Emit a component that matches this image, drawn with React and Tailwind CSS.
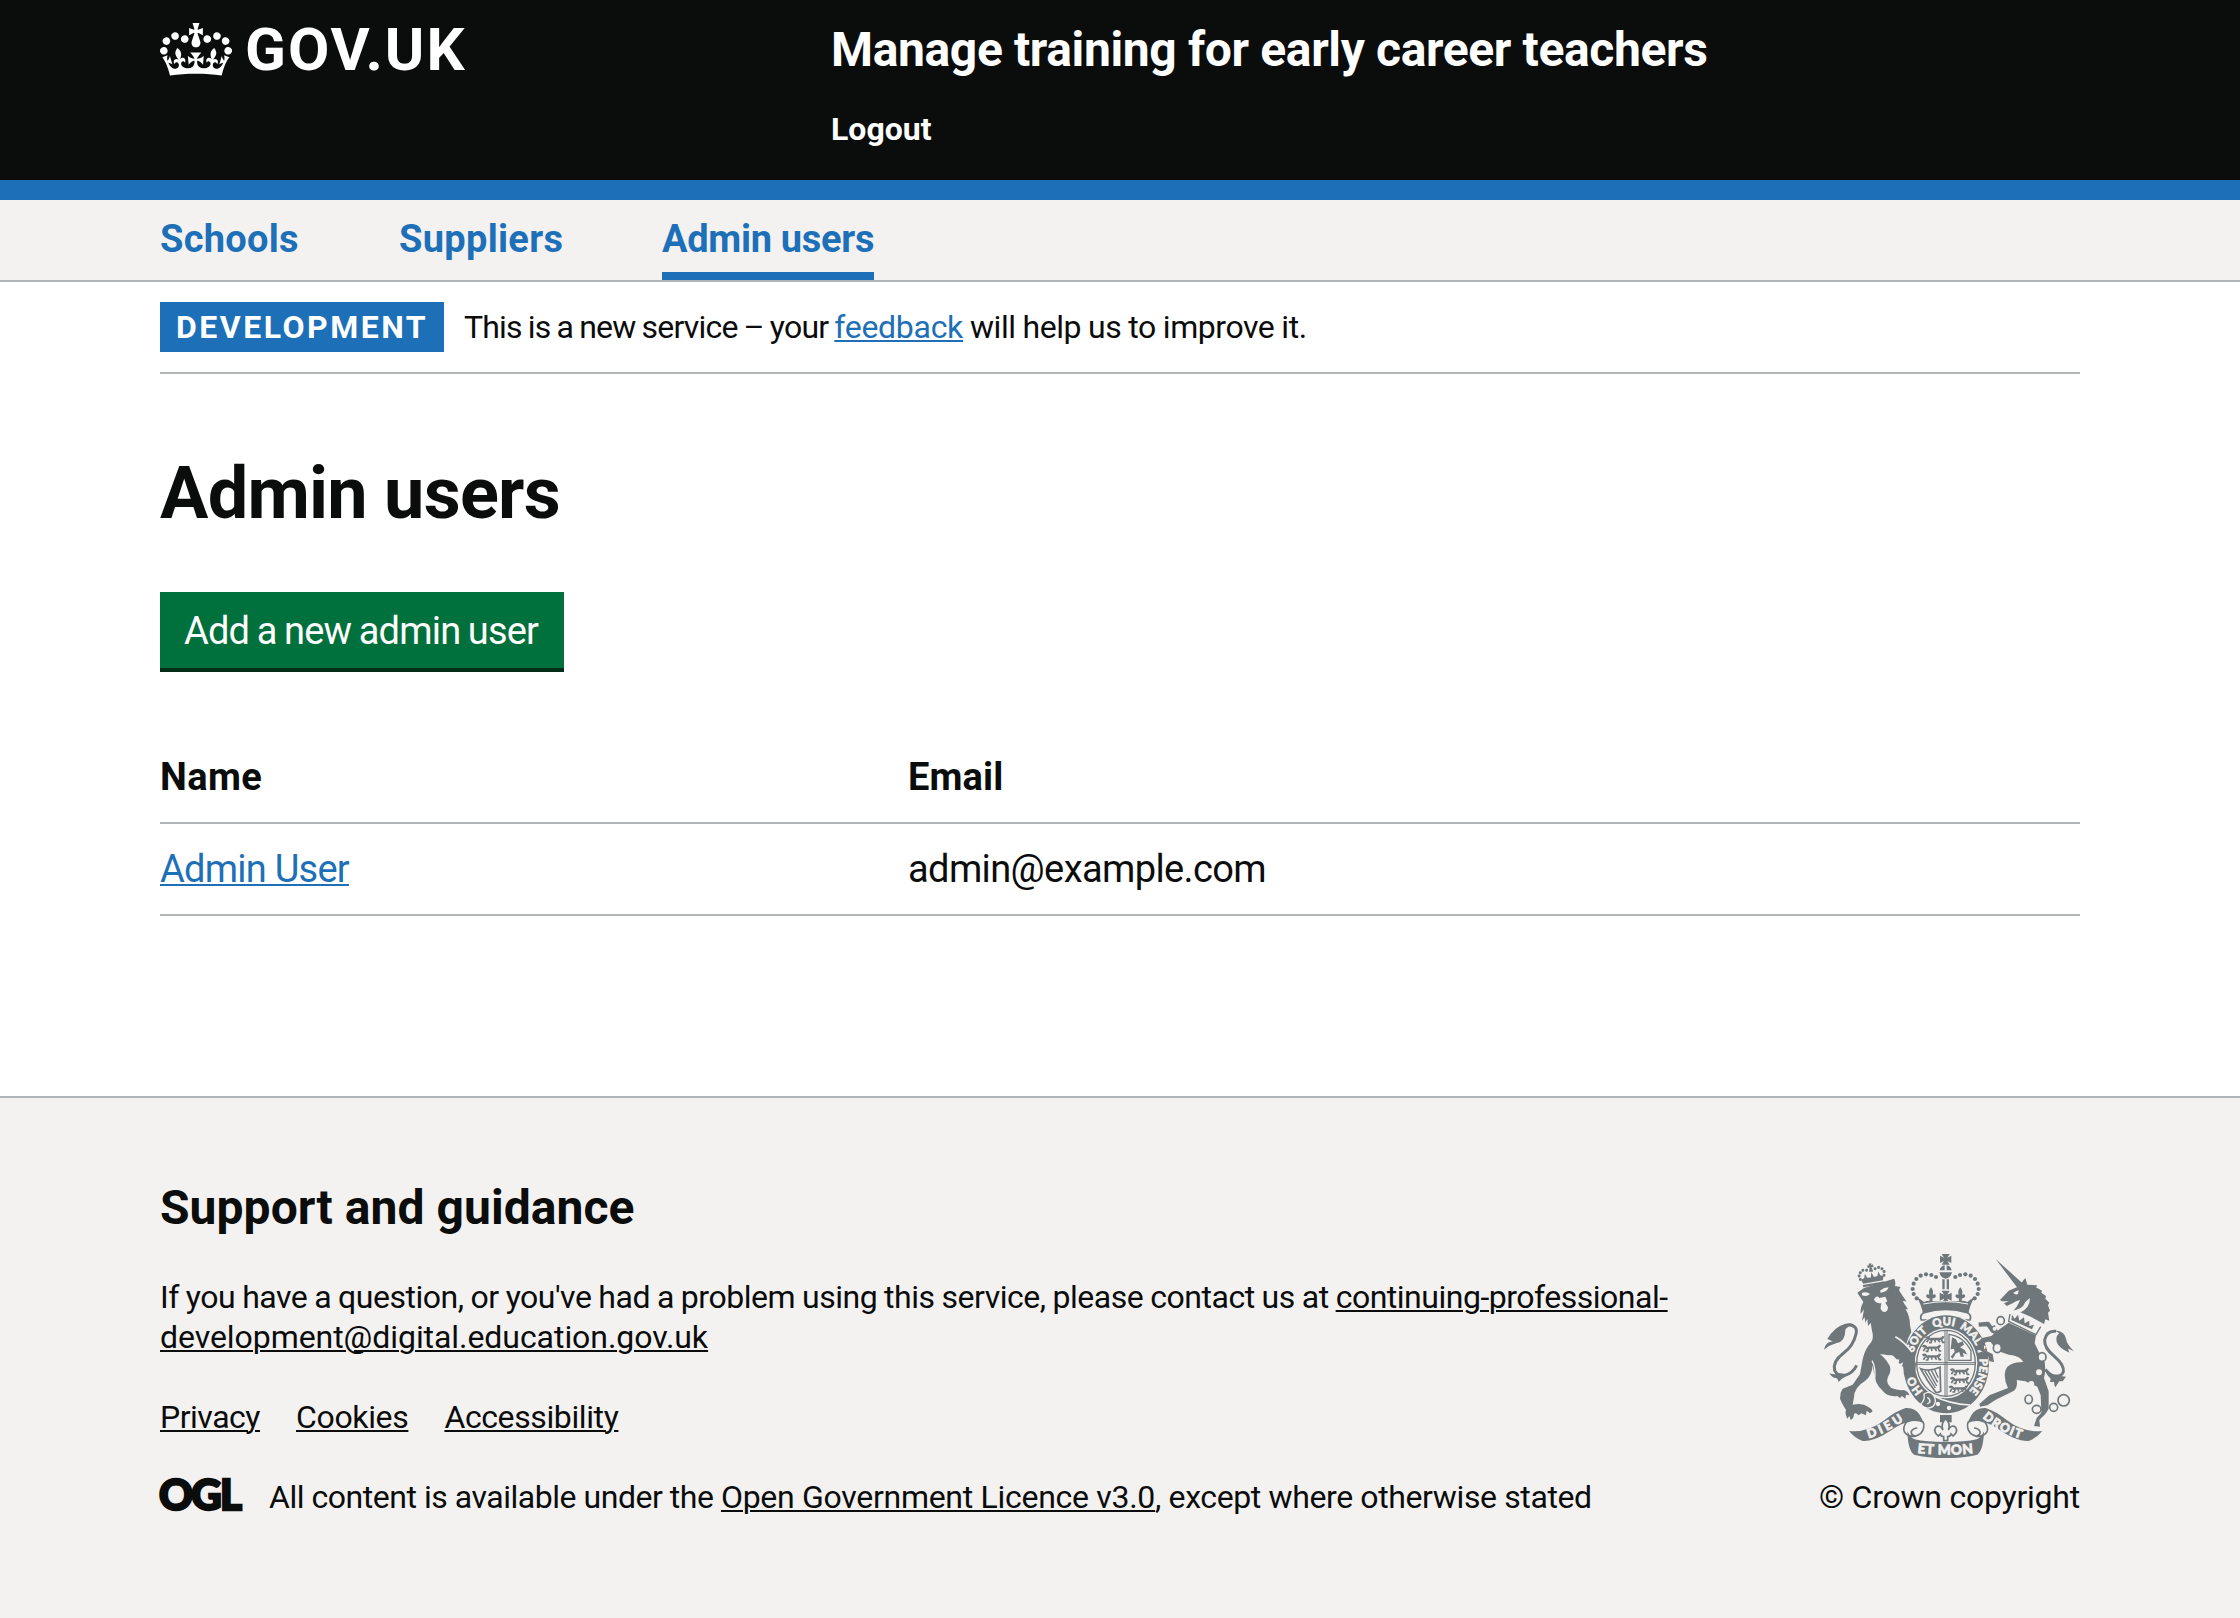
const INK = "#6f777b";
const PAPER = "#f3f2f1";

function Crown() {
  return (
    <svg viewBox="0 0 132 97" className="h-[53px] w-[72px]" fill="currentColor" aria-hidden="true">
      <path
        fillRule="evenodd"
        d="M25 30.2c3.5 1.5 7.7-.2 9.1-3.7 1.5-3.6-.2-7.8-3.9-9.2-3.6-1.4-7.6.3-9.1 3.9-1.4 3.5.3 7.5 3.9 9zM9 39.5c3.6 1.5 7.8-.2 9.2-3.7 1.5-3.6-.2-7.8-3.9-9.1-3.6-1.5-7.6.2-9.1 3.8-1.4 3.5.3 7.5 3.8 9zM4.4 57.2c3.5 1.5 7.7-.2 9.1-3.8 1.5-3.6-.2-7.7-3.9-9.1-3.5-1.5-7.6.3-9.1 3.8-1.4 3.5.3 7.6 3.9 9.1zm38.3-21.4c3.5 1.5 7.7-.2 9.1-3.8 1.5-3.6-.2-7.7-3.9-9.1-3.6-1.5-7.6.3-9.1 3.8-1.3 3.6.4 7.7 3.9 9.1zm64.4-5.6c-3.6 1.5-7.8-.2-9.1-3.7-1.5-3.6.2-7.8 3.8-9.2 3.6-1.4 7.7.3 9.2 3.9 1.3 3.5-.4 7.5-3.9 9zm15.9 9.3c-3.6 1.5-7.7-.2-9.1-3.7-1.5-3.6.2-7.8 3.7-9.1 3.6-1.5 7.7.2 9.2 3.8 1.5 3.5-.3 7.5-3.8 9zm4.7 17.7c-3.6 1.5-7.8-.2-9.2-3.8-1.5-3.6.2-7.7 3.9-9.1 3.6-1.5 7.7.3 9.2 3.8 1.3 3.5-.4 7.6-3.9 9.1zM89.3 35.8c-3.6 1.5-7.8-.2-9.2-3.8-1.4-3.6.2-7.7 3.9-9.1 3.6-1.5 7.7.3 9.2 3.8 1.4 3.6-.3 7.7-3.9 9.1zM69.7 17.7l8.9 4.7V9.3l-8.9 2.8c-.2-.3-.5-.6-.9-.9L72.4 0H59.6l3.5 11.2c-.3.3-.6.5-.9.9l-8.8-2.8v13.1l8.8-4.7c.3.3.6.7.9.9l-5 15.4v.1c-.2.8-.4 1.6-.4 2.4 0 4.1 3.1 7.5 7 8.1h.2c.3 0 .7.1 1 .1.4 0 .7 0 1-.1h.2c4-.6 7.1-4.1 7.1-8.1 0-.8-.1-1.7-.4-2.4V34l-5.1-15.4c.4-.2.7-.6 1-.9zM66 92.8c16.9 0 32.8 1.1 47.1 3.2 4-16.9 8.9-26.7 14-33.5l-9.6-3.4c1 4.9 1.1 7.2 0 10.2-1.5-1.4-3-4.3-4.2-8.7L108.6 76c2.8-2 5-3.2 7.5-3.3-4.4 9.4-10 11.9-13.6 11.2-4.3-.8-6.3-4.6-5.6-7.9 1-4.7 5.7-5.9 8-.5 4.3-8.7-3-11.4-7.6-8.8 7.1-7.2 7.9-13.5 2.1-21.1-8 6.1-8.1 12.3-4.5 20.8-4.7-5.4-12.1-2.5-9.5 6.2 3.4-5.2 7.9-2 7.2 3.1-.6 4.3-6.4 7.8-13.5 7.2-10.3-.9-10.9-8-11.2-13.8 2.5-.5 7.1 1.8 11 7.3L80.2 60c-4.1 4.4-8 5.3-12.3 5.4 1.4-4.4 8-11.6 8-11.6H55.5s6.4 7.2 7.9 11.6c-4.2-.1-8-1-12.3-5.4l1.4 16.4c3.9-5.5 8.5-7.7 10.9-7.3-.3 5.8-.9 12.8-11.1 13.8-7.2.6-12.9-2.9-13.5-7.2-.7-5 3.8-8.3 7.1-3.1 2.7-8.7-4.6-11.6-9.4-6.2 3.7-8.5 3.6-14.7-4.6-20.8-5.8 7.6-5 13.9 2.2 21.1-4.7-2.6-11.9.1-7.7 8.8 2.3-5.5 7.1-4.2 8.1.5.7 3.3-1.3 7.1-5.7 7.9-3.5.7-9-1.8-13.5-11.2 2.5.1 4.7 1.3 7.5 3.3l-4.7-15.4c-1.2 4.4-2.7 7.2-4.3 8.7-1.1-3-.9-5.3 0-10.2l-9.5 3.4c5 6.9 9.9 16.7 14 33.5 14.8-2.1 30.8-3.2 47.7-3.2z"
      />
    </svg>
  );
}

function OglMark() {
  return (
    <svg viewBox="0 0 82 34" className="mt-px h-[34px] w-[82px] overflow-visible" aria-label="Open Government Licence">
      <text x="-1" y="32" textLength="83" fontFamily="Lato, sans-serif" fontWeight="900" fontSize="42" fill="#0b0c0c" stroke="#0b0c0c" strokeWidth="2.4">OGL</text>
    </svg>
  );
}

/* Half of the central crown; drawn twice, once mirrored. */
function CrownHalf() {
  const pearls = [[408, 111], [394, 105], [378, 103], [362, 107], [349, 117], [341, 131], [338, 147], [341, 162], [350, 175]];
  return (
    <g>
      {pearls.map(([x, y]) => <circle key={x + "-" + y} cx={x} cy={y} r="6.3" />)}
      <path d="M393 142q9 10 5 22q9-4 10 5q-4 8-11 6l1 12h-10l1-12q-7 2-11-6q1-9 10-5q-4-12 5-22z" />
      <path d="M350 172q14 6 22 14q14-6 20-2h46v32q-39-2-69 8q-4-30-19-52z" />
    </g>
  );
}

/* Half of the motto scroll; drawn twice, once mirrored. */
function ScrollHalf() {
  return (
    <g>
      <path d="M147 573q56 6 106-32q34-28 64-37q28-2 42 20q8 14 13 26q-26-12-46-3q-22 2-56 26q-50 34-84 29q-22-8-39-29z" />
      <path d="M320 545q-14 18-6 32q10 14 30 12q24-6 27-26q2-10-2-18M344 588q-12-4-10-14q6-10 18-10" fill="none" stroke={INK} strokeWidth="5" />
      <path d="M322 574q2 58 20 70q40 10 96 10v-48q-61 0-94-8q-12-4-22-24z" />
    </g>
  );
}

/* One passant lion of the quartered shield. */
function Passant({ x, y }) {
  return (
    <g transform={`translate(${x} ${y})`} fill="none" stroke={INK}>
      <path d="M2 3q6-6 10 0t8 2h24q8 0 10-8" strokeWidth="7" />
      <path d="M10 6l-6 9M20 7l-3 9h-6M38 7l6 8M48 5l4 10h6M28 6l2 9" strokeWidth="5" />
    </g>
  );
}

function RoyalArms() {
  return (
    <svg viewBox="72 42 750 612" className="h-[204px] w-[250px]" fill={INK} aria-hidden="true">
      {/* crown */}
      <path d="M425 42h24l-7 11 12-6v22l-12-6 7 11h-24l7-11-12 6V47l12 6z" />
      <path d="M434 76v15h-15q3-13 15-15zM440 76q12 2 15 15h-15zM418 97h38q-4 17-19 19q-15-2-19-19z" />
      <path d="M427 118h7v30h-7zM440 118h7v30h-7z" />
      <path d="M425 152h24l-7 12 13-6v24l-13-6 4 12h-18l4-12-13 6v-24l13 6z" />
      <CrownHalf />
      <g transform="translate(874 0) scale(-1 1)"><CrownHalf /></g>
      <path d="M370 192q67-14 134 0" fill="none" stroke={PAPER} strokeWidth="3" />
      <path d="M372 218q65-20 130 0q14 6 8 22h-146q-6-16 8-22z" fill={PAPER} stroke={INK} strokeWidth="5" />

      {/* garter */}
      <ellipse cx="438" cy="373" rx="133" ry="150" fill={PAPER} />
      <ellipse cx="438" cy="373" rx="129" ry="147" />
      <ellipse cx="438" cy="370" rx="94" ry="105" fill={PAPER} />
      <ellipse cx="438" cy="370" rx="88" ry="99" fill="none" stroke={INK} strokeWidth="4" />
      <path id="garter" d="M438 484A101 114 0 0 1 438 256A101 114 0 0 1 438 484" fill="none" />
      <g fill={PAPER} stroke={PAPER} strokeWidth="1.5" fontFamily="Lato, sans-serif" fontWeight="900" fontSize="34" textAnchor="middle">
        <text><textPath href="#garter" startOffset="104">HO</textPath></text>
        <text><textPath href="#garter" startOffset="240">SOIT</textPath></text>
        <text><textPath href="#garter" startOffset="331">QUI</textPath></text>
        <text><textPath href="#garter" startOffset="416">MAL</textPath></text>
        <text><textPath href="#garter" startOffset="471">Y</textPath></text>
        <text><textPath href="#garter" startOffset="545">PENSE</textPath></text>
      </g>

      {/* quartered shield */}
      <path d="M435 272v196M441 272v196M350 368h176M350 373h176" stroke={INK} strokeWidth="3" />
      <Passant x={376} y={292} />
      <Passant x={366} y={318} />
      <Passant x={366} y={344} />
      <Passant x={450} y={388} />
      <Passant x={450} y={414} />
      <Passant x={446} y={440} />
      <path d="M447 283q44 6 66 50v28h-66z" fill="none" stroke={INK} strokeWidth="4" />
      <path d="M456 292l12 6 6 12 14-6 4 10-12 8 14 8 8 14-14-6 4 12h-10l-4-14-10 4-10 16-6-6 12-14-2-10-10 2z" />
      <path d="M362 386q26 10 58-4l2 72q-14 8-18-2q-22-28-42-66z" fill="none" stroke={INK} strokeWidth="5" />
      <path d="M374 392l32 52M384 392l26 46M394 391l19 36M404 389l11 24" stroke={INK} strokeWidth="4" />

      {/* buckle and strap */}
      <path d="M402 468q46 24 108 27" fill="none" stroke={PAPER} strokeWidth="5" />
      <path d="M372 462q18-12 30 6q10 20-4 32q-22 12-36-8q14-12 10-30z" stroke={PAPER} strokeWidth="4" />
      <path d="M382 472q8 4 8 14l-8 6" fill="none" stroke={PAPER} strokeWidth="4" />
      <circle cx="414" cy="492" r="6.5" fill={PAPER} />
      <circle cx="447" cy="504" r="6.5" fill={PAPER} />

      {/* lion */}
      <path d="M172 158l20-14 90-28q6 8 3 22l17 3q-6 6-4 12l22 32q-8-4-12-1l16 24q-6 0-8-2q14 22 14 50l4 20q-12 20-16 38l18 24 12 34-2 22-8-6-4 10-8-10-6 4-2-16q-8 8-12 2l4-12q-8 8-14 4l2-12q-8 2-12-4-8-12-20-8l-26-4q16 14 22 24q18 22 2 44q-8 18 10 34q20 8 36 6q16 4 18 16l-10-2-2 12-10-8-6 6-8-6q-30 4-46-18q-20-16-24-50l-4-24q-2 32-22 46-34 20-34 50l-4 22q30-6 46 6 12 6 14 14l-8 6-10-8-2 14-14-6-8 6q-10-10-14-4 0 14-10 18l-4-12-6 8q-8-16-4-26l-12-20-6-14 2-18 6-12 30-12 22-32 8-44q6-30 26-52 8-14 2-34l-4-24-8 10-2-22-6 12-2-16-8 10 6-34-10 14q-2-18 8-36z" />
      <path d="M186 158q16-4 24 4q-10 10-24 4zM240 152q12-10 26-10q-4 14-24 16zM222 178q8-14 16-4l18-4 6 14-6 4 8 14q0 14-12 14-12-4-10-16l2-10q-14 0-20-8z" fill={PAPER} />
      <path d="M286 290q26 14 50 46" fill="none" stroke={PAPER} strokeWidth="5" />
      <path d="M216 362q12 20 8 60" fill="none" stroke={PAPER} strokeWidth="4" />
      <path d="M148 254q26 4 20 28-8 36-38 58-34 26-26 52 8 16 30 14 24-6 36-30" fill="none" stroke={INK} strokeWidth="9" />
      <path d="M72 329q6-26 28-24-10-4-18-8 20-36 54-46 20-4 26 4-20 4-26 14 0 36-26 40-22 6-38 20zM88 400q18 6 34 0l24 4-20 12-10 10q-2-10-8-12-12 0-20-14z" />
      <g transform="rotate(-10 216 108)">
        {[[180, 112], [178, 101], [183, 92], [192, 86], [203, 88], [229, 88], [240, 86], [249, 92], [254, 101], [252, 112]].map(([x, y]) => (
          <circle key={x} cx={x} cy={y} r="4.5" />
        ))}
        <path d="M212 70h9l-2 6 6-2v9l-6-2 3 14h-12l3-14-6 2v-9l6 2zM182 114l10-4 4-12 5 13 11 1 4-16 5 16 11-1 5-13 4 12 9 4-4 12h-60z" />
        <path d="M184 130h66v7h-66z" />
      </g>

      {/* unicorn */}
      <path d="M587 57l84 76-20 9z" />
      <path d="M600 180l26-28 28-12 22-26 6 20 30 2-4 6 18 10-2 6 14 10-2 8 12 12-4 8 6 16-6 6 4 24-12-4-4 14-40-22-42-18-14 4q16-14 24-36-16 4-22 10l-18 8-8-8 14-6-20 0z" />
      <path d="M640 158l16-8-2 12q-8 4-14-4zM632 212q34 0 44-26l14-12q0 30-30 44l-18 6z" fill={PAPER} />
      <path d="M630 222l-4 22 82 40 14-24" fill="none" stroke={INK} strokeWidth="4" />
      <path d="M634 240l2-16 8 12 10-12 4 18 14-10 2 18 14-8 0 16 14-4-6 14z" />
      <path d="M626 248l82 38-4 24 14 28 16 28q4 30-2 48l14 40v52l-8 14-20 20 2 20-18-2 8-24 14-16-2-52-10-26-36-16-26-4q4 20-8 32l-56 28-24 16-22 4-2-8 30-26 56-22q-14-28-8-52 8-26 54-26-10-20-44-22l-34-12-20-26q-16-4-20 8l0 16 26 12 4 24-14-2-2-14-26-20-6-24 12-12 28-6 18-16z" />
      <path d="M604 286l-26-14-14-20-28 2M578 258l10 18" fill="none" stroke={INK} strokeWidth="13" strokeLinejoin="round" />
      <g stroke={INK} strokeWidth="5" fill={PAPER}>
        <ellipse cx="602" cy="242" rx="11" ry="12" />
        <ellipse cx="592" cy="324" rx="12" ry="14" />
        <ellipse cx="726" cy="351" rx="12" ry="13" />
        <ellipse cx="686" cy="478" rx="11" ry="13" />
        <ellipse cx="710" cy="508" rx="13" ry="12" />
        <ellipse cx="761" cy="502" rx="12" ry="12" />
        <circle cx="791" cy="481" r="17" />
      </g>
      <circle cx="584" cy="266" r="6" fill={PAPER} />
      <circle cx="717" cy="397" r="9" fill={PAPER} />
      <circle cx="694" cy="432" r="9" fill={PAPER} />
      <path d="M768 274q-28-4-34 26-2 24 30 50 30 26 26 46-6 14-26 12-14-2-28-20" fill="none" stroke={INK} strokeWidth="9" />
      <path d="M758 272q34-2 40 24 2 16 24 38-10-6-18-8l4 12q-32-14-38-32-4-18 8-26-8-8-20-8zM734 388q12 18 32 18l32 4-10 14-10 0-12 18q-4-8-4-16l-12 0 2-10q-14-12-18-28z" />

      {/* scroll and pendant */}
      <ScrollHalf />
      <g transform="translate(874 0) scale(-1 1)"><ScrollHalf /></g>
      <path d="M420 525h35v22h-35z" />
      <path d="M437 536q16 16 8 34 10-18 22-8 8 14-8 26l-6-6q-2 8-10 8v12h-12v-12q-8 0-10-8l-6 6q-16-12-8-26 12-10 22 8-8-18 8-34z" fill={PAPER} stroke={INK} strokeWidth="5" />
      <path id="motto-left" d="M206 595q54-16 112-58" fill="none" />
      <path id="motto-right" d="M547 533q52 46 126 66" fill="none" />
      <path id="motto-mid" d="M352 639q85 10 171 0" fill="none" />
      <g fill={PAPER} stroke={PAPER} strokeWidth="2" fontFamily="Lato, sans-serif" fontWeight="900">
        <text fontSize="37"><textPath href="#motto-left" textLength="118">DIEU</textPath></text>
        <text fontSize="37"><textPath href="#motto-right" textLength="132">DROIT</textPath></text>
        <text fontSize="41"><textPath href="#motto-mid" textLength="168">ET MON</textPath></text>
      </g>
    </svg>
  );
}

const LINK = "underline decoration-2 underline-offset-[2px]";

export default function App() {
  return (
    <div className="min-h-[1618px] bg-white font-['Roboto','Liberation_Sans',sans-serif] text-[#0b0c0c]">
      <header className="h-[200px] border-b-[20px] border-[#1d70b8] bg-[#0b0c0c] text-white">
        <div className="mx-40 flex">
          <a className="flex w-[671px] items-start pt-[23px]">
            <Crown />
            <span className="-mt-[8px] ml-[13px] text-[60px] leading-[70px] font-bold tracking-[2px]">GOV.UK</span>
          </a>
          <div className="pt-5">
            <div className="text-[48px] leading-[60px] font-bold tracking-[-0.37px]">
              Manage training for early career teachers
            </div>
            <div className="mt-[29px] text-[32px] leading-10 font-bold">Logout</div>
          </div>
        </div>
      </header>

      <nav className="border-b-2 border-[#b1b4b6] bg-[#f3f2f1]">
        <ul className="mx-40 flex h-20 gap-[100px] text-[38px] leading-[50px] font-bold text-[#1d70b8]">
          <li className="w-[139px] pt-[14px] tracking-[0.28px] whitespace-nowrap">Schools</li>
          <li className="w-[163px] pt-[14px] tracking-[0.3px] whitespace-nowrap">Suppliers</li>
          <li className="w-[212px] border-b-8 border-[#1d70b8] pt-[14px] tracking-[-0.3px] whitespace-nowrap">Admin users</li>
        </ul>
      </nav>

      <div className="mx-40">
        <div className="flex items-center border-b-2 border-[#b1b4b6] py-5 text-[32px] leading-[50px]">
          <strong className="w-[284px] bg-[#1d70b8] pl-4 font-bold tracking-[2.5px] whitespace-nowrap text-white">DEVELOPMENT</strong>
          <p className="ml-5 tracking-[-0.3px] whitespace-nowrap">
            <span className="tracking-[-0.8px] [word-spacing:-1.1px]">This is a new service – your </span>
            <a className={`${LINK} text-[#1d70b8]`}>feedback</a>
            <span className="tracking-[-0.45px] [word-spacing:-0.5px]"> will help us to improve it.</span>
          </p>
        </div>

        <main className="pt-[82px] pb-[180px]">
          <h1 className="text-[72px] leading-[75px] font-bold tracking-[-0.75px]">Admin users</h1>
          <a className="mt-[61px] block h-[76px] w-[404px] bg-[#00703c] pt-px pl-6 text-[38px] leading-[76px] tracking-[-0.8px] whitespace-nowrap text-white shadow-[0_4px_0_#002d18] [word-spacing:-1.2px]">
            Add a new admin user
          </a>

          <table className="mt-16 w-full table-fixed border-separate border-spacing-0 text-left text-[38px] leading-[50px]">
            <thead>
              <tr>
                <th className="w-[748px] border-b-2 border-[#b1b4b6] py-5 font-bold tracking-[0.4px]">Name</th>
                <th className="border-b-2 border-[#b1b4b6] py-5 font-bold tracking-[0.15px]">Email</th>
              </tr>
            </thead>
            <tbody>
              <tr>
                <td className="border-b-2 border-[#b1b4b6] py-5"><a className={`${LINK} tracking-[-0.75px] text-[#1d70b8]`}>Admin User</a></td>
                <td className="border-b-2 border-[#b1b4b6] py-5 tracking-[-0.61px]">admin@example.com</td>
              </tr>
            </tbody>
          </table>
        </main>
      </div>

      <footer className="h-[522px] border-t-2 border-[#b1b4b6] bg-[#f3f2f1] pt-20 text-[32px] leading-10">
        <div className="mx-40 flex items-end justify-between">
          <div>
            <h2 className="text-[48px] leading-[60px] font-bold tracking-[0.05px]">Support and guidance</h2>
            <p className="mt-[39px] whitespace-nowrap">
              <span className="tracking-[-0.48px] [word-spacing:-0.5px]">If you have a question, or you've had a problem using this service, please contact us at </span>
              <a className={`${LINK} tracking-[-0.49px]`}>continuing-professional-</a>
              <br />
              <a className={`${LINK} tracking-[-0.06px]`}>development@digital.education.gov.uk</a>
            </p>
            <ul className="mt-10 flex gap-9">
              <li><a className={`${LINK} tracking-[-0.48px]`}>Privacy</a></li>
              <li><a className={`${LINK} tracking-[-0.35px]`}>Cookies</a></li>
              <li><a className={`${LINK} tracking-[-0.39px]`}>Accessibility</a></li>
            </ul>
            <div className="mt-10 flex items-start">
              <OglMark />
              <p className="ml-[27px] tracking-[-0.47px] whitespace-nowrap">
                All content is available under the{" "}
                <a className={`${LINK} tracking-[-0.29px]`}>Open Government Licence v3.0</a>
                <span className="tracking-[-0.38px]">, except where otherwise stated</span>
              </p>
            </div>
          </div>
          <div className="flex flex-col items-center gap-[19px]">
            <RoyalArms />
            <span className="tracking-[-0.23px] whitespace-nowrap">© Crown copyright</span>
          </div>
        </div>
      </footer>
    </div>
  );
}
